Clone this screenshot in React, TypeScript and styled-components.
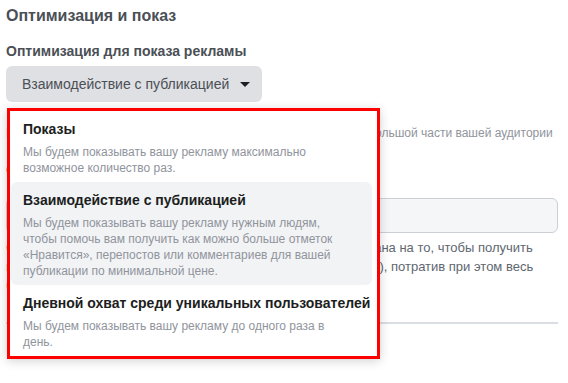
import React, { useState } from "react";
import styled, { createGlobalStyle } from "styled-components";

const GlobalStyle = createGlobalStyle`
  html, body {
    margin: 0;
    padding: 0;
    background: #ffffff;
  }
  body {
    font-family: "Liberation Sans", Arial, sans-serif;
  }
`;

const Page = styled.div`
  width: 568px;
  height: 383px;
  box-sizing: border-box;
  padding: 6px 10px 0 6px;
  overflow: hidden;
`;

const SectionTitle = styled.div`
  font-size: 16px;
  line-height: 20px;
  font-weight: bold;
  color: #4b4f56;
`;

const FieldLabel = styled.div`
  margin-top: 16px;
  font-size: 14px;
  line-height: 18px;
  font-weight: bold;
  color: #4b4f56;
`;

const SelectWrap = styled.div`
  position: relative;
  margin-top: 6px;
  width: 256px;
`;

const SelectButton = styled.button`
  display: flex;
  align-items: center;
  gap: 11px;
  width: 256px;
  height: 36px;
  box-sizing: border-box;
  padding: 0 0 0 16px;
  border: none;
  border-radius: 6px;
  background: #dfe0e3;
  font-family: inherit;
  font-size: 14px;
  color: #4b4f56;
  cursor: pointer;
`;

const Caret = styled.span`
  width: 0;
  height: 0;
  border-left: 5px solid transparent;
  border-right: 5px solid transparent;
  border-top: 5px solid #1c1e21;
`;

const Menu = styled.div`
  position: absolute;
  top: calc(100% + 6px);
  left: 1px;
  z-index: 10;
  width: 373px;
  box-sizing: border-box;
  border: 3px solid #ff0000;
  background: #ffffff;
  box-shadow: 0 2px 10px rgba(0, 0, 0, 0.18);
`;

const Item = styled.div<{ $active?: boolean }>`
  margin: 0 5px 0 1px;
  padding: 9px 12px 6px;
  border-radius: 6px;
  background: ${(p) => (p.$active ? "#f2f3f5" : "transparent")};
  cursor: pointer;
`;

const ItemTitle = styled.div`
  font-size: 14px;
  line-height: 18px;
  font-weight: bold;
  color: #1c1e21;
  white-space: nowrap;
`;

const ItemText = styled.div`
  margin-top: 6px;
  max-width: 320px;
  font-size: 12px;
  line-height: 16px;
  color: #90949c;
`;

const Hint = styled.div`
  margin-top: 23px;
  font-size: 12px;
  line-height: 16px;
  color: #90949c;
  white-space: nowrap;
`;

const SubLabel = styled.div`
  margin-top: 20px;
  font-size: 14px;
  line-height: 18px;
  font-weight: bold;
  color: #4b4f56;
`;

const Input = styled.input`
  display: block;
  margin-top: 19px;
  width: 100%;
  height: 35px;
  box-sizing: border-box;
  border: 1px solid #ccd0d5;
  border-radius: 6px;
  background: #f5f6f7;
  padding: 0 12px;
  font-family: inherit;
  font-size: 14px;
`;

const Note = styled.p`
  margin: 5px 0 0;
  font-size: 13px;
  line-height: 19px;
  color: #606770;
`;

const Divider = styled.hr`
  margin: 27px 0 0;
  border: none;
  height: 2px;
  background: #dadde1;
`;

const options = [
  {
    title: "Показы",
    text: "Мы будем показывать вашу рекламу максимально возможное количество раз.",
  },
  {
    title: "Взаимодействие с публикацией",
    text: "Мы будем показывать вашу рекламу нужным людям, чтобы помочь вам получить как можно больше отметок «Нравится», перепостов или комментариев для вашей публикации по минимальной цене.",
  },
  {
    title: "Дневной охват среди уникальных пользователей",
    text: "Мы будем показывать вашу рекламу до одного раза в день.",
  },
];

export default function App() {
  const [selected, setSelected] = useState(1);
  const [open, setOpen] = useState(true);

  return (
    <>
      <GlobalStyle />
      <Page>
        <SectionTitle>Оптимизация и показ</SectionTitle>
        <FieldLabel>Оптимизация для показа рекламы</FieldLabel>
        <SelectWrap>
          <SelectButton onClick={() => setOpen(!open)}>
            {options[selected].title}
            <Caret />
          </SelectButton>
          {open && (
            <Menu>
              {options.map((o, i) => (
                <Item
                  key={o.title}
                  $active={i === selected}
                  onClick={() => {
                    setSelected(i);
                    setOpen(false);
                  }}
                >
                  <ItemTitle>{o.title}</ItemTitle>
                  <ItemText>{o.text}</ItemText>
                </Item>
              ))}
            </Menu>
          )}
        </SelectWrap>
        <Hint>
          Мы будем показывать вашу рекламу каждый день максимально большой части вашей аудитории
        </Hint>
        <SubLabel>Стоимость результата</SubLabel>
        <Input type="text" />
        <Note>
          Стратегия показа рекламы в первую очередь всегда рассчитана на то, чтобы получить
          максимальное количество результатов (например, переходов), потратив при этом весь
          бюджет.
        </Note>
        <Divider />
      </Page>
    </>
  );
}
